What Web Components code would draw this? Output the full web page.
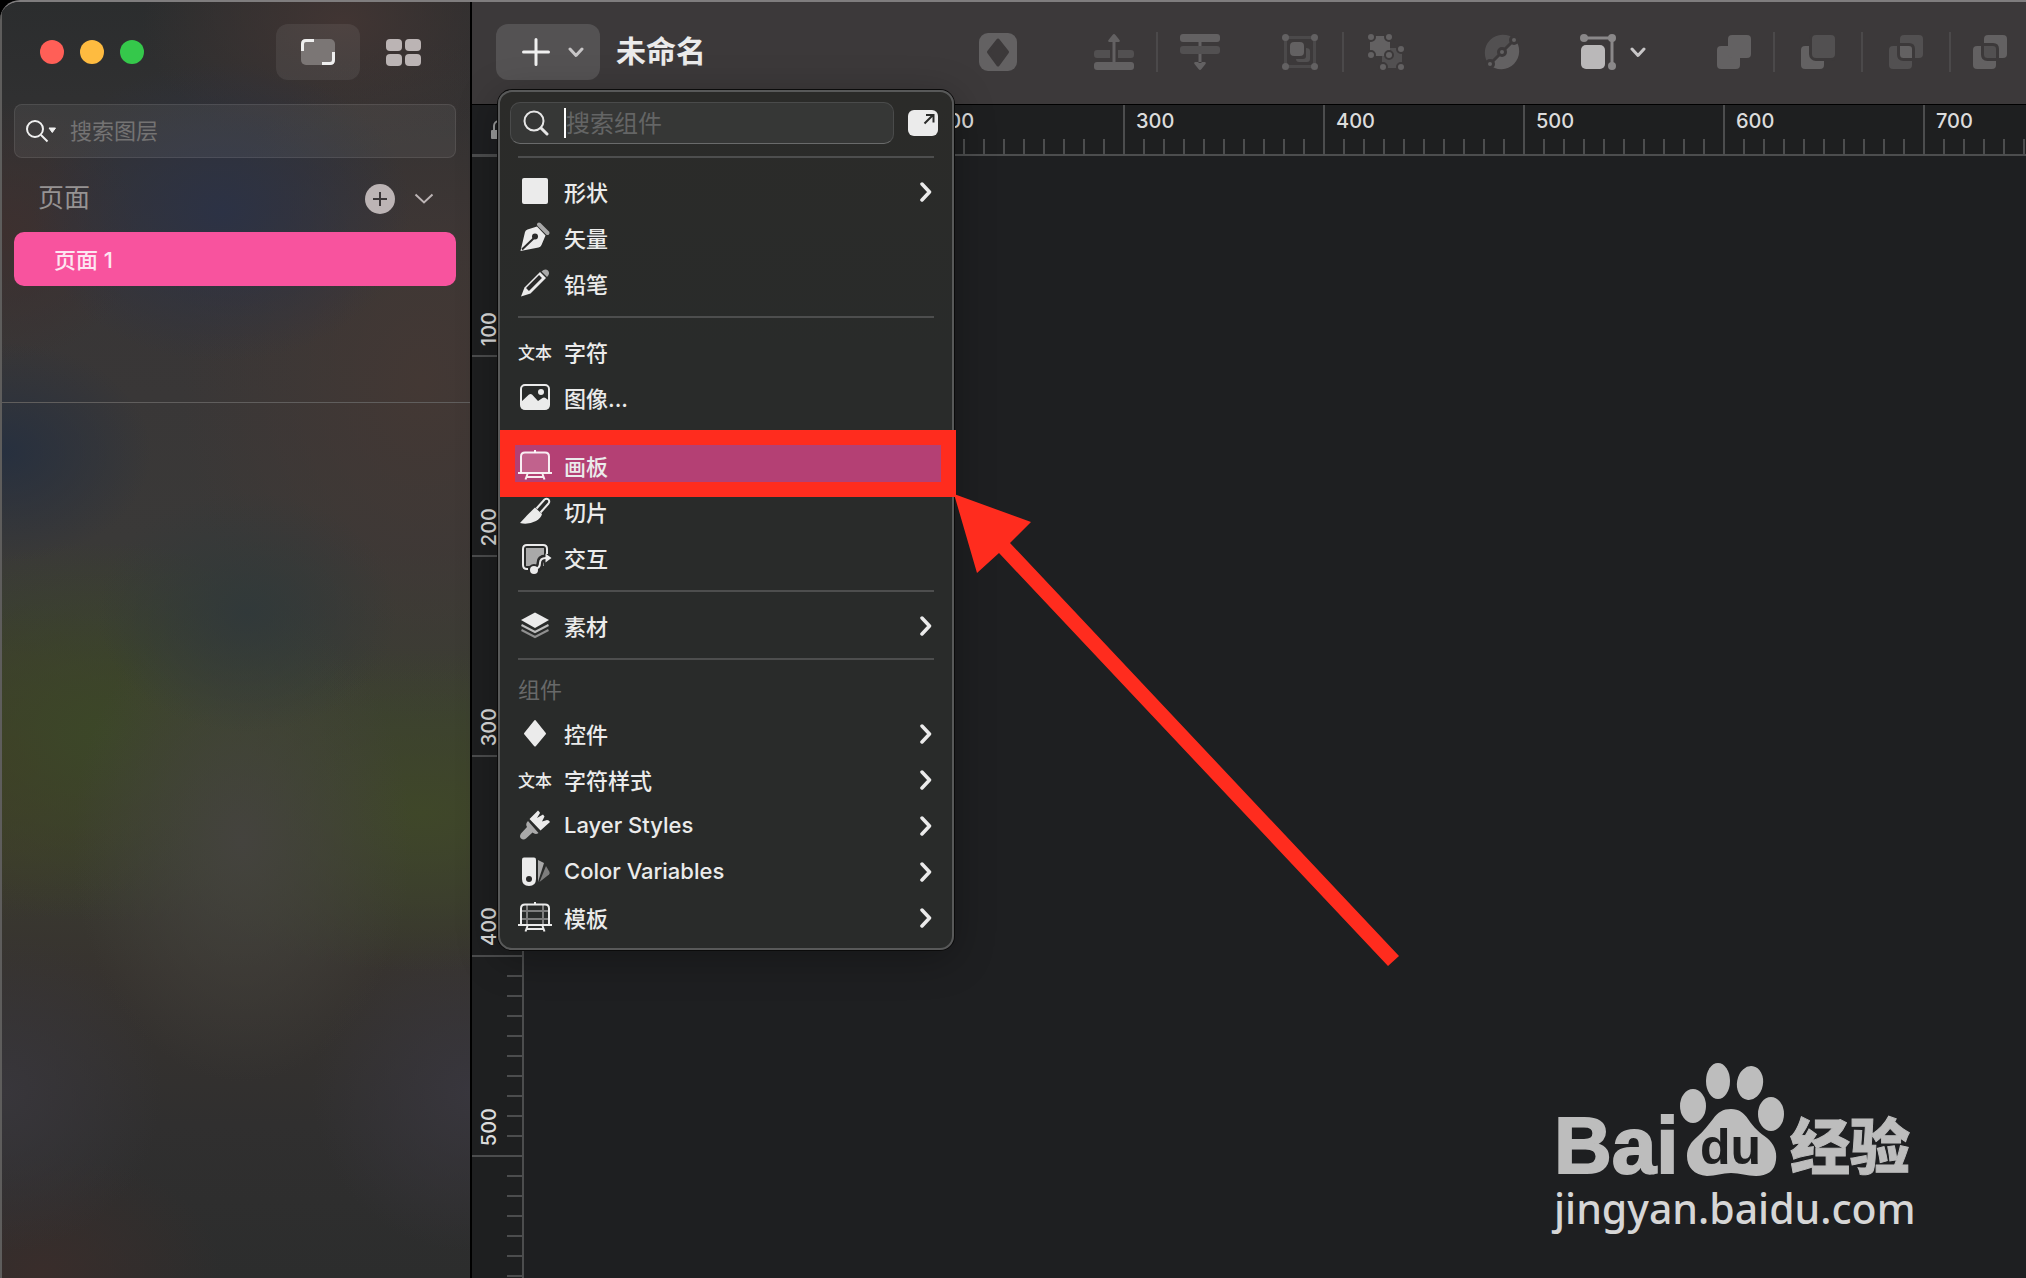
<!DOCTYPE html>
<html lang="zh-CN">
<head>
<meta charset="utf-8">
<meta name="viewport" content="width=device-width, initial-scale=1">
<title>未命名</title>
<style>
    html, body {
        margin: 0;
        height: 100%;
        background: #000;
    }
    body {
        font-family: Inter, "Noto Sans CJK SC", sans-serif;
        font-size: 22px;
        color: #ebebeb;
        overflow: hidden;
    }
</style>
</head>
<body>
<sketch-app></sketch-app>

<script>
// name: [width, height, markup]
const ICONS = {
    canvas: [34, 26, `
        <rect width="34" height="26" rx="5" fill="#7b7675"/>
        <path d="M1.5 12V5q0-3.500 3.500-3.500h8M32.500 13v8q0 3.500-3.500 3.500h-8" fill="none" stroke="#efefef" stroke-width="3"/>`],
    grid: [35, 27, `
        <g fill="#bbb4b4"><rect width="16" height="12" rx="4"/><rect x="19" width="16" height="12" rx="4"/>
        <rect y="15" width="16" height="12" rx="4"/><rect x="19" y="15" width="16" height="12" rx="4"/></g>`],
    searchMenu: [30, 24, `
        <g fill="none" stroke="#f0f0f0" stroke-width="2"><circle cx="9" cy="10" r="8"/><path d="M15 16l6.500 6.500"/></g>
        <path d="M23 9h6.500l-3.200 4.500z" fill="#f0f0f0" stroke="#f0f0f0" stroke-linejoin="round"/>`],
    search: [26, 26, `
        <g fill="none" stroke="#e6e6e6" stroke-width="2"><circle cx="11" cy="11" r="9.500"/><path d="M18 18l6 6" stroke-width="3" stroke-linecap="round"/></g>`],
    addPage: [30, 30, `
        <circle cx="15" cy="15" r="15" fill="#bcb4b5"/><path d="M15 8v14M8 15h14" stroke="#3a3537" stroke-width="2"/>`],
    chevronThin: [20, 12, `<path d="M1.500 1.500l8.500 8 8.500-8" fill="none" stroke="#bcb4b5" stroke-width="2"/>`],
    chevronDown: [16, 11, `<path d="M2 2l6 6.500L14 2" fill="none" stroke="#c8c6c7" stroke-width="3" stroke-linecap="round" stroke-linejoin="round"/>`],
    chevronRight: [12, 20, `<path d="M2 2l7.500 8L2 18" fill="none" stroke="#ebebeb" stroke-width="3.500" stroke-linecap="round" stroke-linejoin="round"/>`],
    plus: [28, 28, `<path d="M14 1.500v25M1.500 14h25" stroke="#f0f0f0" stroke-width="3" stroke-linecap="round"/>`],
    popout: [30, 26, `
        <rect width="30" height="26" rx="6" fill="#ebebeb"/>
        <path d="M16.500 13.500L25 5M18 5h7.500v7.500" fill="none" stroke="#2a2b2a" stroke-width="2"/>`],
    lock: [16, 20, `
        <rect y="10" width="16" height="9" rx="1" fill="#9c9d9d"/><path d="M3 10V6a5 5 0 0 1 10 0v4" fill="none" stroke="#9c9d9d" stroke-width="2"/>`],

    symbol: [38, 38, `
        <rect width="38" height="38" rx="9" fill="#636162"/>
        <path d="M19 7l9.500 12L19 32 9.500 19z" fill="#3c393a" stroke="#3c393a" stroke-width="3" stroke-linejoin="round"/>`],
    forward: [40, 36, `
        <rect y="28" width="40" height="8" rx="3" fill="#636162"/>
        <path d="M3 16h13v8H3q-3 0-3-3v-2q0-3 3-3zM24 16h13q3 0 3 3v2q0 3-3 3H24z" fill="#525051"/>
        <path d="M18.500 7h3v22h-3zM18.500 1q1.500-2 3 0l4 5q1 2-1 2h-9q-2 0-1-2z" fill="#636162"/>`],
    backward: [40, 36, `
        <rect width="40" height="8" rx="3" fill="#636162"/><rect y="12" width="40" height="8" rx="3" fill="#525051"/>
        <path d="M18.500 8h3v4h-3zM18.500 20h3v9h-3zM18.500 35q1.500 2 3 0l4-5q1-2-1-2h-9q-2 0-1 2z" fill="#636162"/>`],
    group: [36, 36, `
        <rect x="3.500" y="3.500" width="29" height="29" fill="none" stroke="#4b494a" stroke-width="3"/>
        <path d="M24 14q4 0 4 3v8q0 3-3 3h-8q-3 0-3-3h7q3 0 3-3z" fill="#525051"/>
        <rect x="8" y="8" width="14" height="14" rx="4" fill="#636162"/>
        <g fill="#636162"><circle cx="3.500" cy="3.500" r="3.500"/><circle cx="32.500" cy="3.500" r="3.500"/><circle cx="3.500" cy="32.500" r="3.500"/><circle cx="32.500" cy="32.500" r="3.500"/></g>`],
    ungroup: [36, 36, `
        <rect x="14" y="14" width="20" height="20" fill="#525051"/>
        <rect x="2" y="2" width="20" height="20" fill="#636162"/>
        <g fill="#636162" stroke="#3c393a" stroke-width="2">
        <circle cx="3" cy="3" r="4"/><circle cx="21" cy="3" r="4"/><circle cx="3" cy="21" r="4"/><circle cx="21" cy="21" r="4"/>
        <circle cx="33" cy="15" r="4"/><circle cx="15" cy="33" r="4"/><circle cx="33" cy="33" r="4"/></g>`],
    vectorMask: [36, 36, `
        <path d="M5.300 30.700A18 18 0 0 1 30.700 5.300z" fill="#525051"/>
        <path d="M5.300 30.700A18 18 0 0 0 30.700 5.300z" fill="#636162"/>
        <path d="M6 30L30 6" stroke="#3c393a" stroke-width="3"/>
        <g fill="#636162" stroke="#3c393a" stroke-width="3"><circle cx="6" cy="30" r="3.500"/><circle cx="18" cy="18" r="3.500"/><circle cx="30" cy="6" r="3.500"/></g>`],
    scale: [36, 36, `
        <path d="M4 4h28v28" fill="none" stroke="#8a8889" stroke-width="3"/>
        <g fill="#8a8889"><circle cx="4" cy="4" r="4"/><circle cx="32" cy="4" r="4"/><circle cx="32" cy="32" r="4"/></g>
        <rect x="1" y="11" width="24" height="24" rx="5" fill="#bab8b9"/>`],
    union: [34, 34, `
        <g fill="#636162"><rect y="11" width="23" height="23" rx="4"/><rect x="11" width="23" height="23" rx="4"/></g>`],
    subtract: [34, 34, `
        <rect y="11" width="23" height="23" rx="4" fill="#636162"/>
        <rect x="8" y="-3" width="29" height="29" rx="7" fill="#3c393a"/><rect x="11" width="23" height="23" rx="4" fill="#525051"/>`],
    intersect: [34, 34, `
        <g fill="#525051"><rect y="11" width="23" height="23" rx="4"/><rect x="11" width="23" height="23" rx="4"/></g>
        <path d="M15 9.500h5q4.500 0 4.500 4.500v10.500h-10q-5 0-5-5V9.500z" fill="#636162" stroke="#3c393a" stroke-width="3"/>`],
    difference: [34, 34, `
        <g fill="#636162"><rect y="11" width="23" height="23" rx="4"/><rect x="11" width="23" height="23" rx="4"/></g>
        <path d="M15 9.500h5q4.500 0 4.500 4.500v10.500h-10q-5 0-5-5V9.500z" fill="#525051" stroke="#3c393a" stroke-width="3"/>`],

    shape: [34, 34, `<rect x="4" y="3" width="26" height="26" rx="2" fill="#ebebeb"/>`],
    vector: [34, 34, `
        <path d="M2.500 30L7 11q.5-2 2.500-2.500L19 5.500l8.500 9-4 9.500q-1 2-3 2.500z" fill="#ebebeb"/>
        <path d="M4 28.500L16 17" stroke="#2a2a2a" stroke-width="2"/><circle cx="17" cy="15.500" r="3" fill="#2a2a2a"/>
        <path d="M21 3.500l8.500 8.500" stroke="#a9a9a9" stroke-width="4" stroke-linecap="round"/>`],
    pencil: [34, 34, `
        <path d="M3 29.500l3.500-9L22 5l6 6-15.500 15.500z" fill="#ebebeb"/>
        <path d="M9.500 22.500L22.500 9.500" stroke="#2a2a2a" stroke-width="4"/>
        <path d="M23.500 4.500q3.500-3.500 6.500-1 2.500 3-1 6.500z" fill="#a9a9a9"/>`],
    image: [34, 34, `
        <rect x="3" y="4" width="28" height="24" rx="4" fill="none" stroke="#ebebeb" stroke-width="2"/>
        <path d="M3 21l8-7.500q1.500-1 3 0l6 6.500 4.500-3q1.500-1 3 0l3.500 2.500V27l-2 1.500H5L3 27z" fill="#ebebeb"/><circle cx="23" cy="11" r="3" fill="#ebebeb"/>`],
    artboard: [34, 34, `
        <path d="M3 23.500V7.500Q3 3.500 7 3.500h20q4 0 4 4v16" fill="#fff" fill-opacity=".18" stroke="#fff" stroke-opacity=".9" stroke-width="2"/>
        <path d="M0 24h34M17 3.500V1M9.500 25l-2 5.500M24.500 25l2 5.500M8.500 28h17" stroke="#fff" stroke-opacity=".9" stroke-width="2" fill="none"/>`],
    slice: [34, 34, `
        <path d="M2 28q8-9 15-15.500l7 6.500q-1 4-6 7-8 4-16 2z" fill="#ebebeb"/>
        <path d="M18.500 13.500l8-9q2-1.500 4 0 1.500 2 0 4l-8 9" fill="none" stroke="#ebebeb" stroke-width="2"/>`],
    hotspot: [34, 34, `
        <rect x="8" y="7" width="18" height="18" fill="#a9a9a9"/>
        <path d="M10 28H9q-4 0-4-4V8q0-4 4-4h16q4 0 4 4v5" fill="none" stroke="#ebebeb" stroke-width="2"/>
        <path d="M16 28q6 0 6-6 0-5 6-5h2" fill="none" stroke="#2a2a2a" stroke-width="7"/><circle cx="16" cy="29" r="6" fill="#2a2a2a"/>
        <path d="M16 28q6 0 6-6 0-5 6-5" fill="none" stroke="#ebebeb" stroke-width="2"/>
        <circle cx="16" cy="29" r="4" fill="#ebebeb"/><path d="M27.500 12.500l6 4.500-6 4.500z" fill="#ebebeb"/>`],
    layers: [34, 34, `
        <path d="M17 3.500L31 11l-14 8-14-8z" fill="#ebebeb"/>
        <path d="M3.500 16L17 23l13.500-7" fill="none" stroke="#bdbdbd" stroke-width="2"/><path d="M3.500 21L17 28l13.500-7" fill="none" stroke="#8f8f8f" stroke-width="2"/>`],
    diamond: [34, 34, `<path d="M17 4l10 12.500-10 12L7 16.500z" fill="#ebebeb" stroke="#ebebeb" stroke-width="2" stroke-linejoin="round"/>`],
    brush: [34, 34, `
        <path d="M10 12q-3 3-1 6l-6 6.500q-2 3 0 5 2.500 2 5 0l6.500-6q3 2.500 6 .5z" fill="#a9a9a9"/>
        <path d="M11.500 10L20 1.500q1.500 1 2 2.500l-3 5q3-2 6-3.500l1.500 2-2.500 5 5-1.500q2 0 3 2L22.500 21.500z" fill="#ebebeb"/>`],
    swatch: [34, 34, `
        <path d="M20 5l6 3-6 19z" fill="#a9a9a9"/><path d="M28 11l3.500 6q.5 1.500-.5 2.500L21.500 27z" fill="#7d7d7d"/>
        <path d="M6 2.500h10q2 0 2 2V24q0 7-7 7t-7-7V4.500q0-2 2-2z" fill="#ebebeb"/><circle cx="11" cy="24" r="3" fill="#2a2a2a"/>`],
    template: [34, 34, `
        <path d="M9 4v20M25 4v20M3 10h28M3 18h28" stroke="#7d7d7d" stroke-width="2"/>
        <path d="M3 23.500V7.500Q3 3.500 7 3.500h20q4 0 4 4v16M0 24h34M17 3.500V1M9.500 25l-2 5.500M24.500 25l2 5.500M8.500 28h17" stroke="#ebebeb" stroke-width="2" fill="none"/>`]
};

class AppIcon extends HTMLElement {
    connectedCallback() {
        const [w, h, body] = ICONS[this.getAttribute('name')];
        this.attachShadow({ mode: 'open' }).innerHTML = `
            <style>
                :host { display: block; flex: none; }
                svg { display: block; }
            </style>
            <svg width="${w}" height="${h}" viewBox="0 0 ${w} ${h}" aria-hidden="true">${body}</svg>
        `;
    }
}
customElements.define('app-icon', AppIcon);

class AppSidebar extends HTMLElement {
    connectedCallback() {
        this.attachShadow({ mode: 'open' }).innerHTML = `
            <style>
                :host {
                    display: flex;
                    flex-direction: column;
                    box-sizing: border-box;
                    border-left: 2px solid #5e5d5c;
                    background:
                        radial-gradient(ellipse 150px 110px at 0 450px, #27303f, transparent),
                        radial-gradient(ellipse 190px 150px at 220px 210px, #2c3245, transparent),
                        radial-gradient(ellipse 150px 120px at 245px 610px, #31393a, transparent),
                        radial-gradient(ellipse 170px 240px at 240px 840px, #44433e, transparent),
                        radial-gradient(ellipse 260px 190px at 100px 730px, #3c4728, transparent),
                        radial-gradient(ellipse 280px 160px at 420px 810px, #3f4729, transparent),
                        radial-gradient(ellipse 220px 160px at 0 760px, #403a26, transparent),
                        radial-gradient(ellipse 240px 340px at 420px 380px, #433834, transparent),
                        radial-gradient(ellipse 140px 130px at 0 230px, #3d302f, transparent),
                        radial-gradient(ellipse 200px 130px at 340px 20px, #413533, transparent),
                        radial-gradient(ellipse 160px 160px at 470px 1090px, #38363d, transparent),
                        radial-gradient(ellipse 160px 160px at 0 1090px, #38363b, transparent),
                        radial-gradient(ellipse 180px 120px at 40px 1270px, #392d2b, transparent),
                        linear-gradient(#2b2d2e, #383536 20%, #3a3938 42%, #3b3f32 56%, #3b3d31 64%, #37332f 76%, #302f2f 88%, #2c2d2d);
                }
                header {
                    display: flex;
                    align-items: center;
                    padding: 22px 25px 24px 38px;
                }
                button { border: 0; background: none; padding: 0; font: inherit; color: inherit; }
                .lights { display: flex; gap: 16px; flex: 1; }
                .lights button { width: 24px; height: 24px; border-radius: 50%; }
                .close { background: #ff5f57; }
                .min { background: #febb40; }
                .max { background: #35c84b; }
                .view {
                    width: 84px;
                    height: 56px;
                    border-radius: 12px;
                    margin-left: 1px;
                    display: grid;
                    place-items: center;
                }
                .view.on { background: rgba(255, 255, 255, .07); }
                .search {
                    display: flex;
                    align-items: center;
                    gap: 14px;
                    height: 52px;
                    margin: 0 14px 0 12px;
                    padding-left: 11px;
                    border: 1px solid rgba(255, 255, 255, .09);
                    border-radius: 8px;
                    background: rgba(255, 255, 255, .06);
                }
                input {
                    flex: 1;
                    min-width: 0;
                    border: 0;
                    outline: 0;
                    background: none;
                    padding: 0;
                    font: inherit;
                    color: inherit;
                }
                input::placeholder { color: #747373; opacity: 1; }
                .pages-head {
                    display: flex;
                    align-items: center;
                    height: 74px;
                    padding: 8px 36px 0 36px;
                    box-sizing: border-box;
                }
                h2 { flex: 1; margin: 0; font-size: 26px; font-weight: 400; line-height: 36px; padding-bottom: 2px; color: #969393; }
                .pages-head button + button { margin-left: 19px; }
                .pages {
                    box-sizing: border-box;
                    height: 171px;
                    border-bottom: 1px solid #605e5d;
                }
                .page {
                    display: block;
                    width: calc(100% - 26px);
                    height: 54px;
                    margin: 0 14px 0 12px;
                    padding: 0 0 2px 40px;
                    border-radius: 10px;
                    background: #f8539e;
                    color: #fde6f1;
                    text-align: left;
                    font-weight: 500;
                }
            </style>
            <header>
                <div class="lights">
                    <button class="close" aria-label="关闭"></button>
                    <button class="min" aria-label="最小化"></button>
                    <button class="max" aria-label="缩放"></button>
                </div>
                <button class="view on" aria-label="画布"><app-icon name="canvas"></app-icon></button>
                <button class="view" aria-label="组件"><app-icon name="grid"></app-icon></button>
            </header>
            <label class="search">
                <app-icon name="searchMenu"></app-icon>
                <input type="text" placeholder="搜索图层" aria-label="搜索图层">
            </label>
            <div class="pages-head">
                <h2>页面</h2>
                <button aria-label="添加页面"><app-icon name="addPage"></app-icon></button>
                <button aria-label="收起"><app-icon name="chevronThin"></app-icon></button>
            </div>
            <nav class="pages">
                <button class="page">页面 1</button>
            </nav>
        `;
    }
}
customElements.define('app-sidebar', AppSidebar);

// icon, "text" draws the two small characters instead of an svg
class MenuItem extends HTMLElement {
    connectedCallback() {
        const icon = this.getAttribute('icon');
        this.attachShadow({ mode: 'open' }).innerHTML = `
            <style>
                :host { display: block; position: relative; }
                button {
                    position: relative;
                    display: flex;
                    align-items: center;
                    width: 100%;
                    height: 46px;
                    padding: 0 20px 0 18px;
                    border: 0;
                    background: none;
                    font: inherit;
                    font-weight: 500;
                    color: #ebebeb;
                    text-align: left;
                }
                .glyph { font-size: 17px; width: 34px; padding-bottom: 2px; white-space: nowrap; }
                .label { flex: 1; padding: 0 0 3px 12px; white-space: nowrap; }
            </style>
            <slot name="callout"></slot>
            <button role="menuitem">
                ${icon === 'text' ? '<span class="glyph">文本</span>' : `<app-icon name="${icon}"></app-icon>`}
                <span class="label"><slot></slot></span>
                ${this.hasAttribute('submenu') ? '<app-icon name="chevronRight"></app-icon>' : ''}
            </button>
        `;
    }
}
customElements.define('menu-item', MenuItem);

// red frame round the row, with an arrow that points at its lower right corner
class RedCallout extends HTMLElement {
    connectedCallback() {
        this.attachShadow({ mode: 'open' }).innerHTML = `
            <style>
                :host {
                    position: absolute;
                    inset: -13px -4px -8px 0;
                    border: 15px solid #ff2c1e;
                    background: #b44074;
                }
                svg {
                    position: absolute;
                    left: 100%;
                    top: 100%;
                    margin: 12px 0 0 13px;
                    pointer-events: none;
                }
            </style>
            <svg width="446" height="474" viewBox="0 0 446 474" aria-hidden="true">
                <path d="M0 0L77 28 56 49 445 462 434 472 45 59 23 79z" fill="#ff2c1e"/>
            </svg>
        `;
    }
}
customElements.define('red-callout', RedCallout);

class InsertMenu extends HTMLElement {
    connectedCallback() {
        this.attachShadow({ mode: 'open' }).innerHTML = `
            <style>
                :host {
                    display: block;
                    box-sizing: border-box;
                    width: 456px;
                    border: 2px solid #585959;
                    border-radius: 14px;
                    box-shadow: 0 0 0 1px #0b0b0b, 0 8px 40px rgba(0, 0, 0, .3);
                    background: linear-gradient(#2b2b29, #292b2a 30%);
                    padding: 10px 0 7px;
                }
                .top { display: flex; align-items: center; padding: 0 14px 0 10px; gap: 14px; }
                .search {
                    flex: 1;
                    min-width: 0;
                    display: flex;
                    align-items: center;
                    box-sizing: border-box;
                    height: 42px;
                    padding: 0 12px 0 12px;
                    border: 1px solid #4a4b4b;
                    border-bottom-color: #6a6b6b;
                    border-radius: 10px;
                    background: #363736;
                }
                .caret { flex: none; width: 2px; height: 30px; margin-left: 15px; background: #fff; }
                input {
                    flex: 1;
                    min-width: 0;
                    height: 36px;
                    border: 0;
                    outline: 0;
                    padding: 0;
                    background: none;
                    font: inherit;
                    font-size: 24px;
                    color: inherit;
                }
                input::placeholder { color: #646565; opacity: 1; }
                .out { flex: none; border: 0; padding: 0; background: none; }
                hr { height: 2px; margin: 9px 18px 11px; border: 0; background: #4d4e4e; }
                .top + hr { margin-top: 12px; }
                .gap { height: 22px; }
                h3 {
                    margin: 0 18px;
                    padding-bottom: 2px;
                    font-size: 22px;
                    line-height: 38px;
                    font-weight: 400;
                    color: #686969;
                }
            </style>
            <div class="top">
                <label class="search">
                    <app-icon name="search"></app-icon>
                    <span class="caret"></span>
                    <input type="text" placeholder="搜索组件" aria-label="搜索组件">
                </label>
                <button class="out" aria-label="打开组件窗口"><app-icon name="popout"></app-icon></button>
            </div>
            <hr>
            <menu-item icon="shape" submenu>形状</menu-item>
            <menu-item icon="vector">矢量</menu-item>
            <menu-item icon="pencil">铅笔</menu-item>
            <hr>
            <menu-item icon="text">字符</menu-item>
            <menu-item icon="image">图像...</menu-item>
            <div class="gap"></div>
            <menu-item icon="artboard"><red-callout slot="callout"></red-callout>画板</menu-item>
            <menu-item icon="slice">切片</menu-item>
            <menu-item icon="hotspot">交互</menu-item>
            <hr>
            <menu-item icon="layers" submenu>素材</menu-item>
            <hr>
            <h3>组件</h3>
            <menu-item icon="diamond" submenu>控件</menu-item>
            <menu-item icon="text" submenu>字符样式</menu-item>
            <menu-item icon="brush" submenu>Layer Styles</menu-item>
            <menu-item icon="swatch" submenu>Color Variables</menu-item>
            <menu-item icon="template" submenu>模板</menu-item>
        `;
    }
}
customElements.define('insert-menu', InsertMenu);

class AppToolbar extends HTMLElement {
    connectedCallback() {
        this.attachShadow({ mode: 'open' }).innerHTML = `
            <style>
                :host {
                    display: flex;
                    align-items: center;
                    box-sizing: border-box;
                    height: 103px;
                    padding: 0 0 2px 24px;
                    border-bottom: 1px solid #000;
                    background: #3c393a;
                }
                button { flex: none; border: 0; padding: 0; background: none; }
                .insert { position: relative; flex: none; }
                .add {
                    display: flex;
                    align-items: center;
                    gap: 18px;
                    width: 104px;
                    height: 56px;
                    padding: 0 16px 0 26px;
                    border-radius: 12px;
                    background: #545253;
                }
                insert-menu { position: absolute; left: 2px; top: 66px; z-index: 2; }
                h1 {
                    flex: none;
                    width: 363px;
                    margin: 0 0 0 16px;
                    padding-bottom: 2px;
                    font-size: 30px;
                    line-height: 40px;
                    font-weight: 700;
                }
                .tools { display: flex; align-items: center; flex: 1; min-width: 0; }
                .group { display: flex; align-items: center; flex: none; gap: 24px; }
                .group.order { margin-left: 77px; gap: 22px; }
                .group.nest { margin-left: 62px; }
                .group.mask { margin-left: 80px; }
                .group.size { margin-left: 60px; gap: 14px; }
                .group.bool { margin-left: 71px; gap: 26px; }
                .bool button:first-child { margin-right: -4px; }
                .bool button:last-child { margin-left: -4px; }
                i { width: 2px; height: 40px; background: #4b494a; }
            </style>
            <div class="insert">
                <button class="add" aria-label="插入"><app-icon name="plus"></app-icon><app-icon name="chevronDown"></app-icon></button>
                <insert-menu role="menu"></insert-menu>
            </div>
            <h1>未命名</h1>
            <div class="tools">
                <button aria-label="创建组件"><app-icon name="symbol"></app-icon></button>
                <div class="group order">
                    <button aria-label="上移一层"><app-icon name="forward"></app-icon></button><i></i>
                    <button aria-label="下移一层"><app-icon name="backward"></app-icon></button>
                </div>
                <div class="group nest">
                    <button aria-label="编组"><app-icon name="group"></app-icon></button><i></i>
                    <button aria-label="取消编组"><app-icon name="ungroup"></app-icon></button>
                </div>
                <div class="group mask">
                    <button aria-label="编辑"><app-icon name="vectorMask"></app-icon></button>
                </div>
                <div class="group size">
                    <button aria-label="缩放"><app-icon name="scale"></app-icon></button>
                    <button aria-label="更多"><app-icon name="chevronDown"></app-icon></button>
                </div>
                <div class="group bool">
                    <button aria-label="合并"><app-icon name="union"></app-icon></button><i></i>
                    <button aria-label="减去"><app-icon name="subtract"></app-icon></button><i></i>
                    <button aria-label="相交"><app-icon name="intersect"></app-icon></button><i></i>
                    <button aria-label="差集"><app-icon name="difference"></app-icon></button>
                </div>
            </div>
        `;
    }
}
customElements.define('app-toolbar', AppToolbar);

class CanvasRuler extends HTMLElement {
    connectedCallback() {
        const marks = this.getAttribute('marks').split(' ');
        const segs = marks.map(m => `<div><span>${m === '-' ? '' : m}</span></div>`).join('');
        this.attachShadow({ mode: 'open' }).innerHTML = `
            <style>
                :host {
                    --line: #4c4d4e;
                    display: flex;
                    overflow: hidden;
                    box-sizing: border-box;
                    background: #1e1f20;
                    color: #dcdcdc;
                    font-size: 20px;
                    line-height: 24px;
                    font-weight: 500;
                }
                div { flex: 0 0 200px; display: flex; box-sizing: border-box; }
                :host(:not([vertical])) { border-bottom: 2px solid var(--line); }
                :host(:not([vertical])) div {
                    padding: 4px 0 0 13px;
                    background:
                        linear-gradient(var(--line), var(--line)) 0 0 / 2px 100% no-repeat,
                        repeating-linear-gradient(to right, var(--line) 0 2px, transparent 2px 20px) 0 100% / 100% 15px no-repeat;
                }
                :host([vertical]) { flex-direction: column; border-right: 2px solid var(--line); }
                :host([vertical]) div {
                    align-items: flex-end;
                    padding: 0 0 9px 5px;
                    background:
                        linear-gradient(var(--line), var(--line)) 0 0 / 100% 2px no-repeat,
                        repeating-linear-gradient(to bottom, var(--line) 0 2px, transparent 2px 20px) 100% 0 / 15px 100% no-repeat;
                }
                :host([vertical]) span { writing-mode: vertical-rl; transform: rotate(180deg); }
            </style>
            ${segs}
        `;
    }
}
customElements.define('canvas-ruler', CanvasRuler);

class BaiduMark extends HTMLElement {
    connectedCallback() {
        this.attachShadow({ mode: 'open' }).innerHTML = `
            <style>
                :host { display: block; width: 364px; color: #bdbdbd; }
                svg { display: block; overflow: visible; }
                .latin { font: 700 80px "Liberation Sans", sans-serif; stroke: currentColor; stroke-width: 2px; }
                .du { font: 700 50px "Liberation Sans", sans-serif; }
                .cjk { font: 900 60px "Noto Sans CJK SC", sans-serif; stroke: currentColor; stroke-width: 1px; }
                p { margin: 0; font: 500 41px/52px "Noto Sans", sans-serif; color: #d6d6d6; white-space: nowrap; }
            </style>
            <svg width="364" height="118" viewBox="0 0 364 118" fill="currentColor">
                <text class="latin" x="0" y="109">Bai</text>
                <ellipse cx="139" cy="42" rx="13" ry="17"/>
                <ellipse cx="164" cy="17" rx="12" ry="18"/>
                <ellipse cx="196" cy="19" rx="13" ry="17" transform="rotate(10 196 19)"/>
                <ellipse cx="217" cy="50" rx="13" ry="17"/>
                <path d="M177 45c8 0 13 4 17 10 6 9 12 14 19 19 7 6 10 13 9 22-1 11-9 16-20 16-9 0-16-3-25-3s-15 3-24 3c-13-1-20-9-20-20 0-8 4-14 10-19 7-6 11-12 16-18 5-7 10-10 18-10z"/>
                <text class="du" x="146" y="100" fill="#1e1f20">du</text>
                <text class="cjk" x="236" y="105">经验</text>
            </svg>
            <p>jingyan.baidu.com</p>
        `;
    }
}
customElements.define('baidu-mark', BaiduMark);

class SketchApp extends HTMLElement {
    connectedCallback() {
        this.attachShadow({ mode: 'open' }).innerHTML = `
            <style>
                :host {
                    display: flex;
                    box-sizing: border-box;
                    height: 100vh;
                    border-top: 2px solid #7f7d7e;
                    border-top-left-radius: 20px;
                    overflow: hidden;
                    background: #1e1f21;
                }
                app-sidebar { flex: 0 0 470px; }
                main {
                    flex: 1;
                    min-width: 0;
                    display: flex;
                    flex-direction: column;
                    border-left: 2px solid #000;
                }
                .rulers { display: flex; height: 51px; flex: none; }
                .corner {
                    flex: none;
                    box-sizing: border-box;
                    width: 51px;
                    padding: 15px 0 0 19px;
                    border-bottom: 2px solid #4c4d4e;
                }
                .rulers canvas-ruler { flex: 1; min-width: 0; }
                .work { flex: 1; min-height: 0; display: flex; }
                .work canvas-ruler { flex: 0 0 52px; margin-top: -1px; }
                .canvas {
                    flex: 1;
                    display: flex;
                    align-items: flex-end;
                    justify-content: flex-end;
                    padding: 0 108px 44px 0;
                }
            </style>
            <app-sidebar></app-sidebar>
            <main>
                <app-toolbar></app-toolbar>
                <div class="rulers">
                    <div class="corner"><app-icon name="lock"></app-icon></div>
                    <canvas-ruler marks="0 100 200 300 400 500 600 700"></canvas-ruler>
                </div>
                <div class="work">
                    <canvas-ruler vertical marks="100 200 300 400 500 -"></canvas-ruler>
                    <div class="canvas"><baidu-mark></baidu-mark></div>
                </div>
            </main>
        `;
    }
}
customElements.define('sketch-app', SketchApp);
</script>
</body>
</html>
